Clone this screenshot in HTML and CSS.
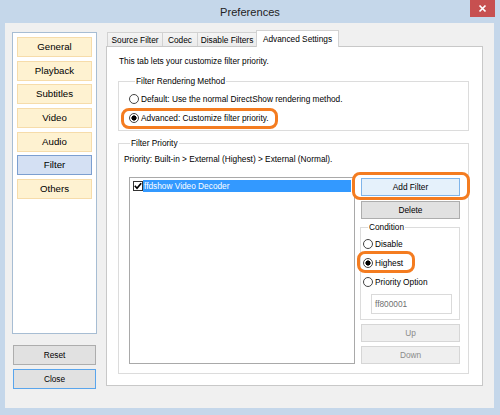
FILE: index.html
```html
<!DOCTYPE html>
<html>
<head>
<meta charset="utf-8">
<title>Preferences</title>
<link rel="stylesheet" href="styles.css">
</head>
<body>
<div class="window">
  <div class="titlebar">
    <span class="title">Preferences</span>
    <span class="close-x"><svg width="9" height="9" viewBox="0 0 9 9"><path d="M1.5 1.5L7.5 7.5M7.5 1.5L1.5 7.5" stroke="#fff" stroke-width="1.7"/></svg></span>
  </div>
  <div class="client">
    <div class="leftcol">
      <div class="nav">
        <div class="navbtn">General</div>
        <div class="navbtn">Playback</div>
        <div class="navbtn">Subtitles</div>
        <div class="navbtn">Video</div>
        <div class="navbtn">Audio</div>
        <div class="navbtn active">Filter</div>
        <div class="navbtn">Others</div>
      </div>
      <div class="btn wide reset">Reset</div>
      <div class="btn wide default">Close</div>
    </div>
    <div class="tabctl">
      <div class="tabs">
        <div class="tab t1">Source Filter</div>
        <div class="tab t2">Codec</div>
        <div class="tab t3">Disable Filters</div>
        <div class="tab sel">Advanced Settings</div>
      </div>
      <div class="panel">
        <div class="intro">This tab lets your customize filter priority.</div>
        <fieldset class="group g1">
          <legend>Filter Rendering Method</legend>
          <div class="radio"><span class="rb"></span>Default: Use the normal DirectShow rendering method.</div>
          <div class="radio"><span class="rb on"></span>Advanced: Customize filter priority.</div>
        </fieldset>
        <fieldset class="group g2">
          <legend>Filter Priority</legend>
          <div class="prio">Priority: Built-in &gt; External (Highest) &gt; External (Normal).</div>
          <div class="prow">
            <div class="listbox">
              <div class="item">
                <span class="cb"><svg width="8" height="8" viewBox="0 0 8 8"><path d="M0.8 3.8L3 6.3L7.2 1.2" stroke="#000" stroke-width="1.7" fill="none"/></svg></span>
                <span class="itemtext">ffdshow Video Decoder</span>
              </div>
            </div>
            <div class="rcol">
              <div class="btn add">Add Filter</div>
              <div class="btn delete">Delete</div>
              <fieldset class="group cond">
                <legend>Condition</legend>
                <div class="radio"><span class="rb"></span>Disable</div>
                <div class="radio"><span class="rb on"></span>Highest</div>
                <div class="radio"><span class="rb"></span>Priority Option</div>
                <div class="edit">ff800001</div>
              </fieldset>
              <div class="btn dis up">Up</div>
              <div class="btn dis down">Down</div>
            </div>
          </div>
        </fieldset>
      </div>
    </div>
  </div>
  <div class="mark m1"></div>
  <div class="mark m2"></div>
  <div class="mark m3"></div>
</div>
</body>
</html>
```
FILE: styles.css
```css
* { box-sizing: border-box; }
html, body { margin: 0; padding: 0; }
body {
  width: 500px;
  height: 415px;
  overflow: hidden;
  font-family: "Liberation Sans", Arial, sans-serif;
  font-size: 8.3px;
  color: #000;
  background: #c5d7ea;
}
.window {
  position: relative;
  width: 500px;
  height: 415px;
  background: #c5d7ea;
  display: flex;
  flex-direction: column;
}
.titlebar {
  position: relative;
  height: 23px;
  flex: none;
  display: flex;
  align-items: center;
  justify-content: center;
}
.title {
  font-size: 11.1px;
  color: #222;
  padding-top: 1px;
}
.close-x {
  position: absolute;
  top: 0;
  right: 5px;
  width: 25px;
  height: 17px;
  background: #c75050;
  display: flex;
  align-items: center;
  justify-content: center;
}
.client {
  flex: 1;
  margin: 0 6px 7px 5px;
  background: #f0f0f0;
  display: flex;
  align-items: flex-start;
  padding: 7px 0 0 7px;
}
.leftcol {
  width: 85px;
  margin-top: 2px;
  display: flex;
  flex-direction: column;
}
.nav {
  height: 302px;
  border: 1px solid #a7bdd3;
  background: #fff;
  padding: 4.3px 0 0 4px;
  display: flex;
  flex-direction: column;
  gap: 3.6px;
}
.navbtn {
  width: 75px;
  height: 20px;
  background: #fef2d1;
  border: 1px solid #f6dcaa;
  font-size: 9.7px;
  line-height: 18px;
  text-align: center;
}
.navbtn.active {
  background: #d4e0f3;
  border-color: #7c9fd0;
}
.btn {
  height: 18px;
  border: 1px solid #adadad;
  background: #e1e1e1;
  display: flex;
  align-items: center;
  justify-content: center;
}
.wide {
  width: 83px;
  height: 20px;
  margin-left: 1px;
}
.reset { margin-top: 11px; }
.default {
  margin-top: 4px;
  border-color: #5aa5ec;
}
.tabctl {
  margin-left: 9px;
  width: 377px;
  display: flex;
  flex-direction: column;
}
.tabs {
  height: 16px;
  display: flex;
  align-items: flex-end;
  padding-left: 1px;
  position: relative;
  z-index: 1;
}
.tab {
  height: 14px;
  border: 1px solid #d2d2d2;
  border-bottom: none;
  background: linear-gradient(#f4f4f4, #ebebeb);
  display: flex;
  align-items: center;
  justify-content: center;
}
.t1 { width: 56px; }
.t2 { width: 36px; margin-left: -1px; }
.t3 { width: 60px; margin-left: -1px; }
.tab.sel {
  width: 83px;
  height: 17px;
  margin-left: -1px;
  margin-bottom: -1px;
  background: #fff;
  padding-bottom: 1px;
}
.panel {
  height: 340px;
  border: 1px solid #c8c8c8;
  background: #fff;
  padding: 9px 13px 0 11px;
}
.intro {
  line-height: 10px;
  margin-left: 1px;
}
.group {
  margin: 0;
  border: 1px solid #dcdcdc;
  min-width: 0;
}
.group legend {
  padding: 0 1px;
  line-height: 10px;
  height: 10px;
  margin-left: 6px;
}
.radio {
  display: flex;
  align-items: center;
  height: 14px;
}
.radio + .radio { margin-top: 5px; }
.rb {
  width: 10px;
  height: 10px;
  border: 1px solid #444;
  border-radius: 50%;
  background: #fff;
  flex: none;
  margin-right: 2px;
}
.rb.on {
  background: radial-gradient(circle, #000 0 2.3px, #fff 2.9px);
}
.g1 {
  margin-top: 10px;
  padding: 6px 0 5px 10px;
}
.g2 {
  margin-top: 7px;
  padding: 6px 8px 9px 5px;
}
.prio { line-height: 10px; }
.prow {
  display: flex;
  align-items: flex-start;
  margin: 13px 0 0 5px;
}
.listbox {
  width: 226px;
  height: 187px;
  border: 1px solid #a9a9a9;
  background: #fff;
  padding: 2px 3px 0 3px;
}
.item {
  display: flex;
  align-items: center;
  height: 12px;
}
.cb {
  width: 10px;
  height: 10px;
  border: 1px solid #333;
  background: #fff;
  flex: none;
  display: flex;
  align-items: center;
  justify-content: center;
}
.itemtext {
  flex: 1;
  height: 12px;
  line-height: 12px;
  background: #3399ff;
  color: #fff;
  padding-left: 1px;
}
.rcol {
  width: 99px;
  margin-left: 6px;
  display: flex;
  flex-direction: column;
}
.add {
  margin-top: 1px;
  background: #e5f1fb;
  border-color: #7fb5ea;
}
.delete { margin-top: 5px; }
.cond {
  margin: 3px 0 0 -1px;
  width: 100px;
  padding: 5px 0 5px 2px;
}
.cond legend { margin-left: 5px; }
.edit {
  width: 81px;
  height: 20px;
  margin: 5px 0 0 8px;
  border: 1px solid #dadada;
  background: #fff;
  color: #707070;
  padding-left: 3px;
  line-height: 18px;
}
.dis {
  background: #efefef;
  border-color: #d6d6d6;
  color: #8a8a8a;
}
.up { margin-top: 4px; }
.down { margin-top: 4px; }
.mark {
  position: absolute;
  border: 3px solid #f47c20;
  border-radius: 8px;
}
.m1 { left: 121px; top: 108px; width: 157px; height: 21px; }
.m2 { left: 352px; top: 172px; width: 118px; height: 28px; }
.m3 { left: 357px; top: 251px; width: 58px; height: 22px; }
```
